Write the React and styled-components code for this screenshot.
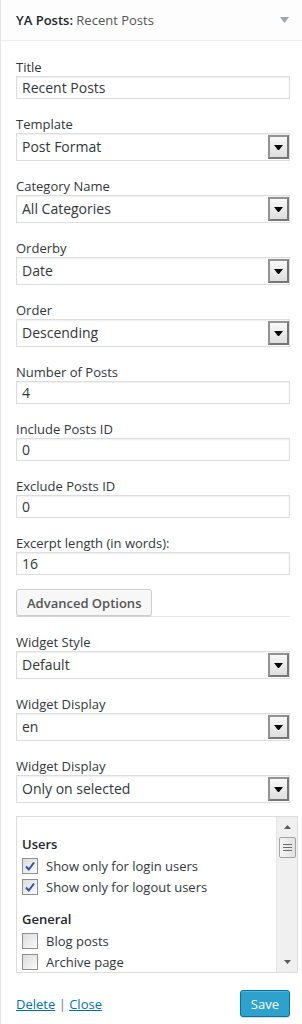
import React from "react";
import styled, { createGlobalStyle } from "styled-components";

const GlobalStyle = createGlobalStyle`
  body {
    margin: 0;
    background: #fff;
    font-family: "Open Sans", "Liberation Sans", sans-serif;
    font-size: 13px;
    color: #32373c;
  }
`;

const Widget = styled.div`
  width: 301px;
  min-height: 100vh;
  border-left: 1px solid #e5e5e5;
  background: #fff;
`;

const Header = styled.div`
  height: 40px;
  border-bottom: 1px solid #eee;
  background: #fdfdfd;
  display: flex;
  align-items: center;
  justify-content: space-between;
  padding: 0 13px 0 15px;
  font-size: 13px;
`;

const HeaderTitle = styled.h3`
  margin: 0;
  font-size: 13px;
  font-weight: 600;
  color: #23282d;
  span {
    font-weight: 400;
    color: #555;
  }
`;

const Body = styled.div`
  padding: 17px 12px 0 15px;
`;

const Field = styled.div`
  margin-bottom: ${(p) => p.$gap || 16}px;
`;

const Label = styled.label`
  display: block;
  line-height: 18px;
  color: #32373c;
`;

const Input = styled.div`
  box-sizing: border-box;
  height: 23px;
  width: 274px;
  border: 1px solid #ddd;
  box-shadow: inset 0 1px 2px rgba(0, 0, 0, 0.07);
  padding: 0 5px;
  font-size: 14px;
  line-height: 21px;
  color: #32373c;
`;

const Select = styled.div`
  position: relative;
  box-sizing: border-box;
  height: 28px;
  width: 274px;
  border: 1px solid #ddd;
  box-shadow: inset 0 1px 2px rgba(0, 0, 0, 0.07);
  padding: 0 5px;
  font-size: 14px;
  line-height: 26px;
  color: #32373c;
`;

const SelectButton = styled.span`
  position: absolute;
  top: 1px;
  bottom: 1px;
  right: 0;
  width: 21px;
  box-sizing: border-box;
  border: 2px solid #7a7a7a;
  border-color: #939393 #777 #777 #939393;
  background: linear-gradient(#f8f8f8, #dedede);
  display: flex;
  align-items: center;
  justify-content: center;
`;

const Divider = styled.div`
  width: 274px;
  border-bottom: 1px solid #e5e5e5;
  margin-bottom: 16px;
`;

const SecondaryButton = styled.button`
  display: block;
  height: 27px;
  padding: 0 10px;
  border: 1px solid #ccc;
  border-radius: 3px;
  background: #f7f7f7;
  box-shadow: inset 0 1px 0 #fff, 0 1px 0 rgba(0, 0, 0, 0.08);
  font-family: inherit;
  font-size: 13px;
  font-weight: 600;
  color: #555;
`;

const ListBox = styled.div`
  box-sizing: border-box;
  width: 282px;
  height: 157px;
  border: 1px solid #ddd;
  display: flex;
  overflow: hidden;
`;

const ListContent = styled.div`
  flex: 1;
  padding: 17px 0 0 5px;
`;

const GroupTitle = styled.div`
  font-weight: 600;
  color: #23282d;
  line-height: 21px;
`;

const Group = styled.div`
  margin-bottom: 12px;
`;

const CheckRow = styled.div`
  display: flex;
  align-items: center;
  height: 21px;
  gap: 8px;
  color: #32373c;
  white-space: nowrap;
`;

const Box = styled.span`
  box-sizing: border-box;
  width: 16px;
  height: 16px;
  border: 1px solid #8f8f8f;
  background: linear-gradient(135deg, #dcdcdc, #f4f4f4 80%, #fff);
  display: flex;
  align-items: center;
  justify-content: center;
`;

const ScrollBar = styled.div`
  width: 20px;
  background: #f0f0f0;
  border-left: 1px solid #e6e6e6;
  display: flex;
  flex-direction: column;
  align-items: center;
`;

const ScrollArrow = styled.div`
  height: 20px;
  width: 100%;
  display: flex;
  align-items: center;
  justify-content: center;
`;

const Thumb = styled.div`
  box-sizing: border-box;
  width: 17px;
  height: 21px;
  border: 1px solid #a3a3a3;
  border-radius: 2px;
  background: linear-gradient(90deg, #f4f4f4, #e2e2e2);
  display: flex;
  align-items: center;
  justify-content: center;
`;

const Spacer = styled.div`
  flex: 1;
`;

const Footer = styled.div`
  display: flex;
  justify-content: space-between;
  align-items: center;
  width: 274px;
  margin-top: 17px;
`;

const Links = styled.div`
  color: #72777c;
  a {
    color: #0073aa;
    text-decoration: underline;
  }
`;

const PrimaryButton = styled.button`
  height: 27px;
  padding: 0 10px;
  border: 1px solid #0074a2;
  border-radius: 3px;
  background: #2ea2cc;
  box-shadow: inset 0 1px 0 rgba(120, 200, 230, 0.5), 0 1px 0 rgba(0, 0, 0, 0.15);
  color: #fff;
  font-family: inherit;
  font-size: 13px;
`;

const Arrow = () => (
  <svg width="9" height="5" viewBox="0 0 9 5">
    <polygon points="0,0 9,0 5,5 4,5" fill="#000" />
  </svg>
);

const SelectField = ({ label, value, gap }) => (
  <Field $gap={gap}>
    <Label>{label}</Label>
    <Select>
      {value}
      <SelectButton>
        <Arrow />
      </SelectButton>
    </Select>
  </Field>
);

const InputField = ({ label, value, gap }) => (
  <Field $gap={gap}>
    <Label>{label}</Label>
    <Input>{value}</Input>
  </Field>
);

const Check = ({ checked, children }) => (
  <CheckRow>
    <Box>
      {checked && (
        <svg width="12" height="12" viewBox="0 0 12 12">
          <path d="M2 6.5 L4.8 9.5 L10 2.5" stroke="#3052a8" strokeWidth="2" fill="none" />
        </svg>
      )}
    </Box>
    {children}
  </CheckRow>
);

export default function App() {
  return (
    <>
      <GlobalStyle />
      <Widget>
        <Header>
          <HeaderTitle>
            YA Posts: <span>Recent Posts</span>
          </HeaderTitle>
          <svg width="9" height="6" viewBox="0 0 9 6">
            <polygon points="0,0 9,0 4.5,6" fill="#a0a5aa" />
          </svg>
        </Header>
        <Body>
          <InputField label="Title" value="Recent Posts" />
          <SelectField label="Template" value="Post Format" />
          <SelectField label="Category Name" value="All Categories" />
          <SelectField label="Orderby" value="Date" />
          <SelectField label="Order" value="Descending" />
          <InputField label="Number of Posts" value="4" />
          <InputField label="Include Posts ID" value="0" />
          <InputField label="Exclude Posts ID" value="0" />
          <InputField label="Excerpt length (in words):" value="16" gap={14} />
          <Divider>
            <SecondaryButton>Advanced Options</SecondaryButton>
          </Divider>
          <SelectField label="Widget Style" value="Default" />
          <SelectField label="Widget Display" value="en" />
          <SelectField label="Widget Display" value="Only on selected" gap={13} />
          <ListBox>
            <ListContent>
              <Group>
                <GroupTitle>Users</GroupTitle>
                <Check checked>Show only for login users</Check>
                <Check checked>Show only for logout users</Check>
              </Group>
              <Group>
                <GroupTitle>General</GroupTitle>
                <Check>Blog posts</Check>
                <Check>Archive page</Check>
              </Group>
            </ListContent>
            <ScrollBar>
              <ScrollArrow>
                <svg width="7" height="4" viewBox="0 0 7 4">
                  <polygon points="3.5,0 7,4 0,4" fill="#5a5a5a" />
                </svg>
              </ScrollArrow>
              <Thumb>
                <svg width="9" height="9" viewBox="0 0 9 9">
                  <path d="M0 1.5 H9 M0 4.5 H9 M0 7.5 H9" stroke="#6a6a6a" strokeWidth="1" />
                </svg>
              </Thumb>
              <Spacer />
              <ScrollArrow>
                <svg width="7" height="4" viewBox="0 0 7 4">
                  <polygon points="0,0 7,0 3.5,4" fill="#5a5a5a" />
                </svg>
              </ScrollArrow>
            </ScrollBar>
          </ListBox>
          <Footer>
            <Links>
              <a>Delete</a> | <a>Close</a>
            </Links>
            <PrimaryButton>Save</PrimaryButton>
          </Footer>
        </Body>
      </Widget>
    </>
  );
}
